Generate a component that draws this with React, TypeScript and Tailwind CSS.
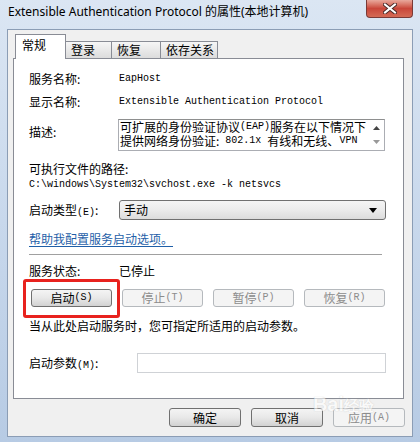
import React from "react";

const cjk = { fontFamily: '"Noto Sans CJK SC", "Noto Sans", sans-serif' };
const mono = { fontFamily: '"Liberation Mono", "Noto Sans CJK SC", monospace' };

const Latin = ({ children }: { children: React.ReactNode }) => (
  <span className="text-[10px] leading-none" style={mono}>
    {children}
  </span>
);

const Button = ({ label, hot, disabled, w = "w-[81px]", h = "h-[18px]" }: { label: string; hot: string; disabled?: boolean; w?: string; h?: string }) => (
  <div
    className={`${w} ${h} flex items-center justify-center rounded-[3px] text-[12px] leading-none ${
      disabled
        ? "border border-[#b5b9bd] bg-[#f4f4f4] text-[#8c8c8c]"
        : "border border-[#707070] bg-gradient-to-b from-[#f4f4f4] via-[#e8e8e8] to-[#d2d2d2] text-black"
    }`}
  >
    {label}
    {hot && <Latin>{hot}</Latin>}
  </div>
);

const Tab = ({ label, active, w }: { label: string; active?: boolean; w: string }) =>
  active ? (
    <div className={`${w} h-[25px] -mb-px z-10 border border-b-0 border-[#898c95] bg-white pl-[6px] pt-[4px] text-[12px] leading-none`}>
      {label}
    </div>
  ) : (
    <div className={`${w} mt-[7px] h-[17px] pl-[5px] border border-b-0 border-l-0 border-[#898c95] bg-gradient-to-b from-[#f6f6f6] to-[#dcdcdc] pt-[2px] text-[12px] leading-none`}>
      {label}
    </div>
  );

export default function App() {
  return (
    <div className="w-[420px] h-[442px] flex flex-col bg-gradient-to-b from-[#dbe6f3] via-[#c8d8ec] to-[#b7cbe4] overflow-hidden" style={cjk}>
      {/* title bar */}
      <div className="h-[29px] flex items-start shrink-0">
        <div className="pl-[8px] pt-[6px] text-[12px] leading-none text-black" style={{ fontFamily: '"Noto Sans", "Noto Sans CJK SC", sans-serif' }}>
          Extensible Authentication Protocol 的属性(本地计算机)
        </div>
        <div className="ml-auto mr-[7px] w-[47px] h-[18px] rounded-b-[4px] border border-t-0 border-[#7a3a36] bg-gradient-to-b from-[#e8a89c] via-[#c9463a] to-[#d46a55] flex items-center justify-center">
          <svg width="14" height="11" viewBox="0 0 14 11">
            <path d="M2 1.5 L12 9.5 M12 1.5 L2 9.5" stroke="#4a2a28" strokeWidth="4" strokeLinecap="square" />
            <path d="M2 1.5 L12 9.5 M12 1.5 L2 9.5" stroke="#ffffff" strokeWidth="2" strokeLinecap="square" />
          </svg>
        </div>
      </div>

      {/* client area */}
      <div className="mx-[7px] mb-[5px] flex-1 flex flex-col bg-[#f0f0f0] border border-[#8b9db5]">
        {/* tabs */}
        <div className="flex items-end pl-[7px] pt-[3px] h-[28px]">
          <Tab label="常规" active w="w-[51px]" />
          <Tab label="登录" w="w-[46px]" />
          <Tab label="恢复" w="w-[49px]" />
          <Tab label="依存关系" w="w-[57px]" />
        </div>

        {/* panel */}
        <div className="ml-[5px] w-[391px] h-[341px] border border-[#898c95] bg-white text-[12px] text-black flex flex-col pl-[15px] pr-[17px] relative">
          <div className="mt-[12px] h-[16px] flex items-center">
            <div className="w-[90px]">服务名称:</div>
            <Latin>EapHost</Latin>
          </div>
          <div className="mt-[7px] h-[16px] flex items-center">
            <div className="w-[90px]">显示名称:</div>
            <Latin>Extensible Authentication Protocol</Latin>
          </div>
          <div className="mt-[9px] h-[32px] flex">
            <div className="w-[89px] pt-[4px]">描述:</div>
            <div className="w-[267px] h-[32px] border border-[#abadb3] border-t-[#8e8f8f] flex">
              <div className="flex-1 pl-px text-[12px] leading-[14px] whitespace-nowrap">
                <div className="h-[14px] flex items-center">
                  可扩展的身份验证协议<Latin>(EAP)</Latin>服务在以下情况下
                </div>
                <div className="h-[14px] flex items-center">
                  提供网络身份验证: <Latin>&nbsp;802.1x&nbsp;</Latin>有线和无线、<Latin>VPN</Latin>
                </div>
              </div>
              <div className="w-[15px] flex flex-col items-center justify-between py-[6px]">
                <svg width="7" height="4" viewBox="0 0 7 4"><path d="M0 4 L3.5 0 L7 4 Z" fill="#444" /></svg>
                <svg width="7" height="4" viewBox="0 0 7 4"><path d="M0 0 L3.5 4 L7 0 Z" fill="#999" /></svg>
              </div>
            </div>
          </div>
          <div className="mt-[10px] h-[16px] flex items-center">可执行文件的路径:</div>
          <div className="h-[15px] flex items-center">
            <Latin>C:\windows\System32\svchost.exe -k netsvcs</Latin>
          </div>
          <div className="mt-[8px] h-[20px] flex items-center">
            <div className="w-[90px]">
              启动类型<Latin>(E)</Latin>:
            </div>
            <div className="w-[267px] h-[20px] rounded-[3px] border border-[#707070] bg-gradient-to-b from-[#f4f4f4] via-[#ebebeb] to-[#dcdcdc] flex items-center pl-[4px] pr-[8px]">
              <span>手动</span>
              <svg className="ml-auto" width="8" height="5" viewBox="0 0 8 5"><path d="M0 0 L4 5 L8 0 Z" fill="#000" /></svg>
            </div>
          </div>
          <div className="mt-[11px] h-[16px] flex items-center">
            <span className="text-[#1f5fa8] underline underline-offset-2">帮助我配置服务启动选项。</span>
          </div>
          <div className="mt-[7px] h-px bg-[#a0a0a0] mr-[4px]" />
          <div className="mt-[8px] h-[16px] flex items-center">
            <div className="w-[90px]">服务状态:</div>
            <span>已停止</span>
          </div>
          <div className="mt-[10px] flex gap-[10px] pl-[2px]">
            <Button label="启动" hot="(S)" />
            <Button label="停止" hot="(T)" disabled />
            <Button label="暂停" hot="(P)" disabled />
            <Button label="恢复" hot="(R)" disabled />
          </div>
          {/* red highlight annotation */}
          <div className="absolute left-[9px] top-[220px] w-[97px] h-[39px] border-[3px] border-[#e8221e] rounded-[3px]" />
          <div className="mt-[11px] h-[16px] flex items-center">当从此处启动服务时，您可指定所适用的启动参数。</div>
          <div className="mt-[19px] h-[20px] flex items-center">
            <div className="w-[108px]">
              启动参数<Latin>(M)</Latin>:
            </div>
            <div className="w-[249px] h-[20px] border border-[#cfd2d6] bg-white" />
          </div>
        </div>

        {/* bottom buttons */}
        <div className="flex justify-end gap-[10px] pr-[7px] mt-[9px] relative">
          <Button label="确定" hot="" w="w-[72px]" h="h-[19px]" />
          <Button label="取消" hot="" w="w-[72px]" h="h-[19px]" />
          <Button label="应用" hot="(A)" disabled w="w-[72px]" h="h-[19px]" />
          <div className="absolute right-[38px] -top-[14px] text-[20px] font-bold text-white opacity-60 leading-none pointer-events-none" style={{ fontFamily: '"Liberation Sans", sans-serif', textShadow: "0 0 1px #aaa" }}>
            Bai<span className="text-[15px]">经验</span>
          </div>
        </div>
      </div>
    </div>
  );
}
